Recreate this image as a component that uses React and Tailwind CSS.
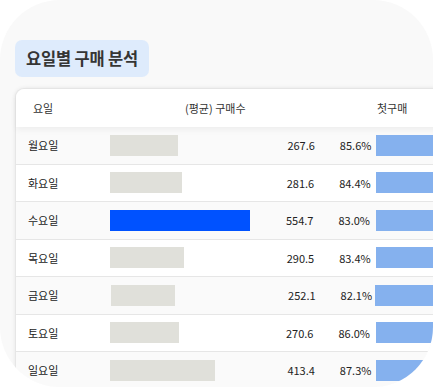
const rows = [
  { day: '월요일', bar: 68, avg: '267.6', pct: '85.6%', first: 377 },
  { day: '화요일', bar: 72, avg: '281.6', pct: '84.4%', first: 378 },
  { day: '수요일', bar: 140, avg: '554.7', pct: '83.0%', first: 379, top: true },
  { day: '목요일', bar: 74, avg: '290.5', pct: '83.4%', first: 378 },
  { day: '금요일', bar: 64, avg: '252.1', pct: '82.1%', first: 376 },
  { day: '토요일', bar: 69, avg: '270.6', pct: '86.0%', first: 379 },
  { day: '일요일', bar: 105, avg: '413.4', pct: '87.3%', first: 377 },
];

export default function App() {
  return (
    <div
      className="w-[433px] h-[387px] bg-white overflow-hidden"
      style={{ fontFamily: '"Noto Sans CJK KR", "Noto Sans", sans-serif' }}
    >
      <div className="h-full rounded-[60px] bg-[#f9f9f9] overflow-hidden pt-[40px] pl-[15px]">
        <div className="inline-flex items-center h-[37px] px-[11px] rounded-[7px] bg-[#deebfc] text-[16.5px] font-bold tracking-[-0.2px] text-[#353535]">
          요일별 구매 분석
        </div>

        <div className="mt-[11px] w-[440px] bg-white rounded-tl-[9px] border-l border-t border-[#e6e6e6] shadow-[0_0_4px_rgba(0,0,0,0.08)]">
          <div className="relative z-10 flex items-center h-[38px] pl-[17px] text-[11px] text-[#333] bg-white rounded-tl-[9px] shadow-[0_3px_6px_rgba(0,0,0,0.05)]">
            <span className="w-[152px]">요일</span>
            <span className="w-[192px]">(평균) 구매수</span>
            <span>첫구매</span>
          </div>

          {rows.map((r, i) => (
            <div
              key={r.day}
              className={`flex items-center h-[37.5px] border-b border-[#e6e6e6] text-[11px] text-[#222] ${i % 2 === 0 ? 'bg-[#fafafa]' : 'bg-white'}`}
            >
              <span className="w-[95px] pl-[12px]">{r.day}</span>
              <div className="w-[150px]">
                <div
                  className={`h-[21px] ${r.top ? 'bg-[#0052ff]' : 'bg-[#e0e0da]'}`}
                  style={{ width: r.bar }}
                />
              </div>
              <span className="w-[56px] text-right">{r.avg}</span>
              <span className="w-[61px] pl-[25px]">{r.pct}</span>
              <div
                className="h-[21px] w-[80px] bg-[#85b1ee]"
                style={{ marginLeft: r.first - 377 }}
              />
            </div>
          ))}
        </div>
      </div>
    </div>
  );
}
